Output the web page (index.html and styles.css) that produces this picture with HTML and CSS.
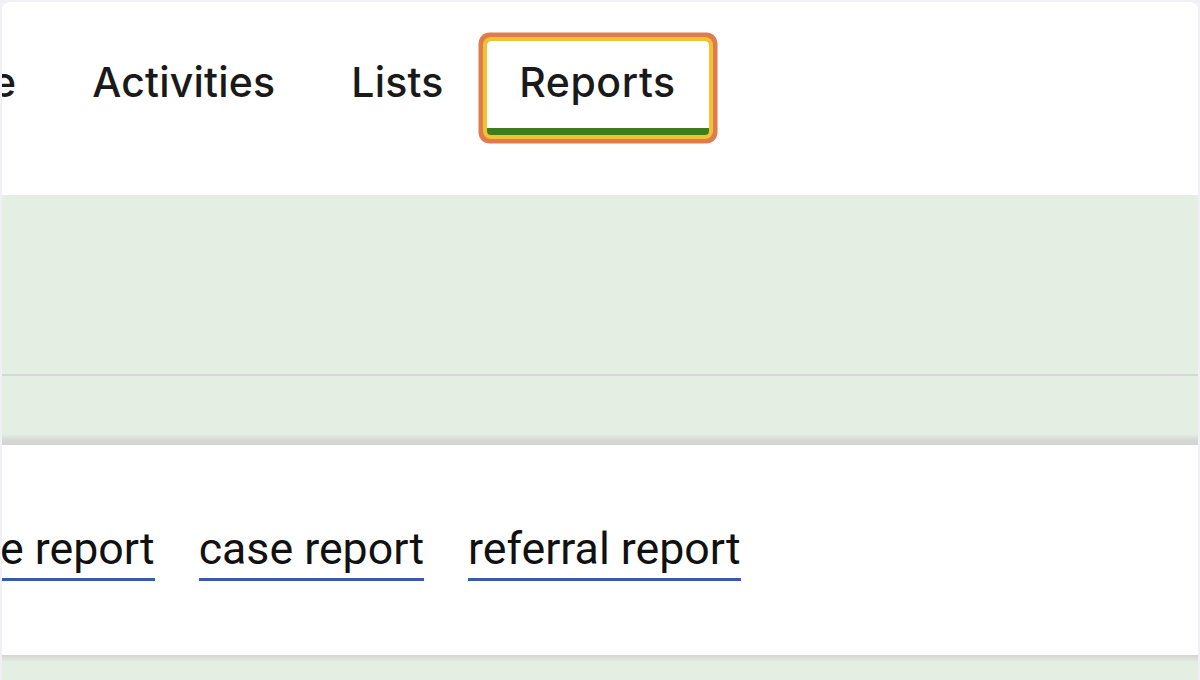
FILE: index.html
```html
<!DOCTYPE html>
<html lang="en">
<head>
<meta charset="utf-8">
<title>Reports</title>
<link rel="stylesheet" href="styles.css">
</head>
<body>
<div class="frame">
  <div class="card">
    <nav class="nav">
      <a class="tab tab-cut">e</a>
      <a class="tab">Activities</a>
      <a class="tab">Lists</a>
      <a class="tab tab-active">Reports</a>
    </nav>
    <section class="band">
      <div class="band-top"></div>
      <div class="band-bottom"></div>
    </section>
    <section class="links">
      <a class="link link-cut">e report</a>
      <a class="link">case report</a>
      <a class="link">referral report</a>
    </section>
    <section class="band-foot"></section>
  </div>
</div>
</body>
</html>
```

FILE: styles.css
```css
* { box-sizing: border-box; }
html, body { margin: 0; padding: 0; }
body {
  background: #f0f0f5;
  width: 1200px;
  height: 680px;
  overflow: hidden;
}
.frame {
  padding: 2px 2px 0 2px;
  height: 680px;
}
.card {
  background: #ffffff;
  border-radius: 8px 8px 0 0;
  height: 678px;
  overflow: hidden;
  display: flex;
  flex-direction: column;
}
.nav {
  height: 193px;
  flex: none;
  display: flex;
  align-items: flex-start;
  gap: 10px;
  padding-top: 39px;
  margin-left: -43px;
  font-family: Inter, "Liberation Sans", sans-serif;
  font-size: 41px;
  font-weight: 500;
  color: #1a1a1a;
}
.tab {
  height: 94px;
  padding: 0 33px 6px;
  display: flex;
  align-items: center;
  border-bottom: 7px solid transparent;
  border-radius: 4px;
  letter-spacing: 0.2px;
}
.tab-active {
  padding: 0 33px 6px 32.5px;
  letter-spacing: 0.6px;
  border-bottom-color: #3f7d1c;
  box-shadow: 0 0 0 4px #f1c232, 0 0 0 8.5px #e07b4d;
  border-radius: 4px;
}
.band {
  height: 250px;
  flex: none;
  background: #e5eee3;
  display: flex;
  flex-direction: column;
}
.band-top {
  height: 181px;
  border-bottom: 2px solid #d6d8d5;
}
.band-bottom {
  flex: 1;
  background: linear-gradient(to bottom, #e5eee3 0, #e5eee3 58px, #d6d8d5 64px, #d2d2d2 100%);
}
.links {
  height: 210px;
  flex: none;
  background: #ffffff;
  display: flex;
  align-items: flex-start;
  gap: 44px;
  padding-top: 78px;
  margin-left: -2px;
  font-family: Roboto, "Liberation Sans", sans-serif;
  font-size: 44.7px;
  color: #111111;
}
.link {
  padding-bottom: 3px;
  border-bottom: 3px solid #3a58ae;
  line-height: 52px;
}
.band-foot {
  flex: 1;
  background: linear-gradient(to bottom, #d4d4d4 0, #dde2da 4px, #e5eee3 7px);
}
```
